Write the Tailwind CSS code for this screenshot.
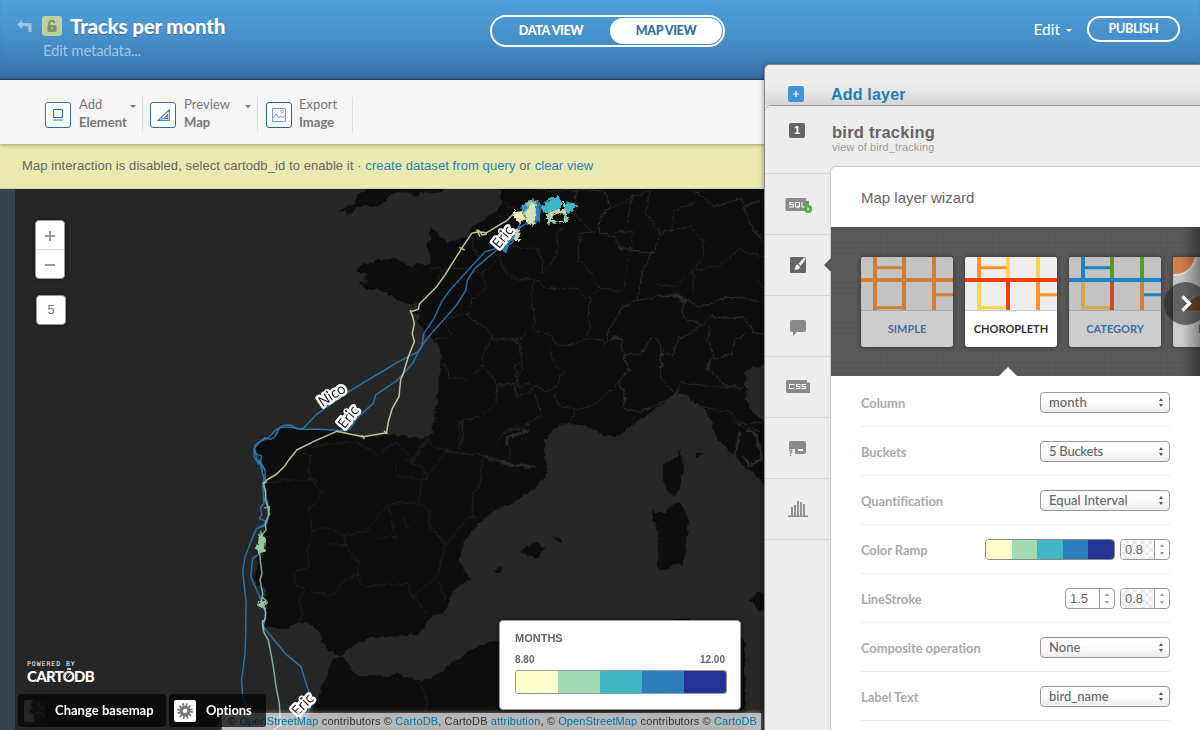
<!DOCTYPE html>
<html lang="en">
<head>
<meta charset="utf-8">
<title>Tracks per month</title>
<script src="https://cdn.jsdelivr.net/npm/@tailwindcss/browser@4"></script>
</head>
<body class="relative flex h-[730px] w-[1200px] flex-col overflow-hidden bg-[#36424a] font-['Lato',sans-serif]">

<!-- Header -->
<header class="flex h-[80px] shrink-0 items-start border-b border-[#2b4a68] bg-gradient-to-b from-[#519fdb] via-[#468fc9] to-[#3871a8] shadow-[inset_0_-6px_5px_-3px_rgba(20,60,110,0.25)]">
  <div class="flex w-[490px] pl-[17px] pt-[13px]">
    <svg class="mt-[6px] h-[14px] w-[15px]" viewBox="0 0 15 14"><path d="M0 5.500 5 1v3h9.500v9h-3.200V7.200H5V10z" fill="#9cc7ea"/></svg>
    <div class="ml-[10px] flex flex-col">
      <div class="flex h-[26px] items-center">
        <span class="flex h-5 w-5 items-center justify-center rounded-[3px] bg-[#bdd0a0]">
          <svg class="h-3 w-[10px]" viewBox="0 0 10 12"><path d="M2.200 5.500V3.200a2.700 2.400 0 0 1 5.400 0" fill="none" stroke="#7f9070" stroke-width="1.800"/><rect x="0.500" y="5" width="9" height="7" rx="1" fill="#7f9070"/><rect x="4.300" y="7.200" width="1.400" height="2.300" fill="#bdd0a0"/></svg>
        </span>
        <h1 class="ml-2 -mt-px whitespace-nowrap text-[20.500px] leading-[26px] font-black tracking-[-0.2px] text-white [text-shadow:0_1px_1px_rgba(0,0,0,0.25)]">Tracks per month</h1>
      </div>
      <span class="ml-px mt-px text-[15px] leading-5 tracking-[-0.25px] text-[#a0c5e6]">Edit metadata...</span>
    </div>
  </div>
  <nav class="mt-[15px] flex h-8 w-[235px] items-center rounded-full border-2 border-white p-[1px] text-[12.500px] font-black">
    <span class="w-[117px] pr-px text-center tracking-[-0.35px] text-white">DATA VIEW</span>
    <span class="flex h-[26px] w-[112px] items-center justify-center rounded-full bg-white tracking-[-0.4px] text-[#2f6ea6]">MAP VIEW</span>
  </nav>
  <div class="ml-auto mr-5 mt-4 flex items-center text-white">
    <span class="text-[15.500px] leading-6">Edit</span>
    <svg class="ml-[6px] mt-[2px] h-[3px] w-[6px]" viewBox="0 0 6 3"><path d="M0 0h6L3 3z" fill="#fff"/></svg>
    <span class="ml-[15px] flex h-[26px] w-[93px] items-center justify-center rounded-full border-2 border-white text-[12.500px] font-bold tracking-[-0.3px]">PUBLISH</span>
  </div>
</header>

<!-- Toolbar -->
<section class="relative z-10 flex h-16 shrink-0 items-start bg-[#f5f5f5] pl-[45px] pt-[17px] text-[13px] leading-[18px] tracking-[0.05px] text-[#777] shadow-[0_1px_4px_rgba(0,0,0,0.35)]">
  <div class="flex h-[35px] w-[98px] items-start border-r border-[#dcdcdc]">
    <span class="mt-[5px] flex h-[26px] w-[26px] items-center justify-center rounded-[3px] border border-[#2f6ea6] bg-white"><svg class="h-[12px] w-[10px]" viewBox="0 0 10 12"><path d="M.5.500h9v8h-9zM0 11h10" fill="none" stroke="#2f6ea6" stroke-width="1.100"/></svg></span>
    <div class="ml-2 -mt-[2px] w-[51px]">Add<br><b>Element</b></div>
    <svg class="mt-[8px] h-[3px] w-[6px]" viewBox="0 0 6 3"><path d="M0 0h6L3 3z" fill="#777"/></svg>
  </div>
  <div class="ml-[7px] flex h-[35px] w-[108px] items-start border-r border-[#dcdcdc]">
    <span class="mt-[5px] flex h-[26px] w-[26px] items-center justify-center rounded-[3px] border border-[#2f6ea6] bg-white"><svg class="h-[12px] w-[13px]" viewBox="0 0 13 12"><path d="M.8 11.400H12.300V.8zM7 9.500h3.500V6z" fill="none" stroke="#4482b8" stroke-width="1.100"/><path d="M3 11V9.500M5 11V7.800" stroke="#4482b8" stroke-width=".8"/></svg></span>
    <div class="ml-2 -mt-[2px] w-[61px]">Preview<br><b>Map</b></div>
    <svg class="mt-[8px] h-[3px] w-[6px]" viewBox="0 0 6 3"><path d="M0 0h6L3 3z" fill="#777"/></svg>
  </div>
  <div class="ml-[8px] flex h-[35px] w-[87px] items-start border-r border-[#dcdcdc]">
    <span class="mt-[5px] flex h-[26px] w-[26px] items-center justify-center rounded-[3px] border border-[#2f5f8c] bg-white"><svg class="h-[14px] w-[14px]" viewBox="0 0 14 14"><path d="M.5.500h13v13H.5zM.8 10l3.400-4 3 4 1.600-2 1.800 2 2.700-3" fill="none" stroke="#6d9fd0" stroke-width="1"/><circle cx="10.300" cy="3.500" r="1.200" fill="none" stroke="#6d9fd0" stroke-width=".9"/></svg></span>
    <div class="ml-[7px] -mt-[2px]">Export<br><b>Image</b></div>
  </div>
</section>

<!-- Notice -->
<p class="h-[45px] shrink-0 border-b border-[#cfcfb9] bg-[#eae9b0] pl-[22px] text-[13px] leading-[43px] tracking-[0.083px] whitespace-nowrap text-[#666] font-['Liberation_Sans',sans-serif]">Map interaction is disabled, select cartodb_id to enable it · <span class="text-[#1f83b4]">create dataset from query</span> or <span class="text-[#1f83b4]">clear view</span></p>

<!-- Map -->
<main class="relative ml-[15px] h-[541px] w-[750px] overflow-hidden bg-[#252527]">
  <svg class="block h-[541px] w-[750px]" viewBox="15 189 750 541">
    <defs>
      <filter id="coast" x="0" y="0" width="1" height="1"><feTurbulence type="fractalNoise" baseFrequency=".16" numOctaves="2" seed="4"/><feDisplacementMap in="SourceGraphic" scale="6" xChannelSelector="R" yChannelSelector="G"/></filter>
      <filter id="blob" x="-20%" y="-20%" width="1.400" height="1.400"><feTurbulence type="fractalNoise" baseFrequency=".3" numOctaves="2" seed="9"/><feDisplacementMap in="SourceGraphic" scale="6" xChannelSelector="R" yChannelSelector="G"/></filter>
    </defs>
    <g filter="url(#coast)">
      <rect x="0" y="170" width="790" height="580" fill="#252527"/>
      <g fill="#0e0e0e">
        <path d="M337 212l8-4 7-4 6-7 4-5 4-8h80l-2 5-4 3-8 1-12-1-2 4-8-3-8-2-10 3-6 6-6 5-8 2-7-1-7 1-5 4-6 4-2-4z"/>
        <path d="M501 170V205l-6 7-7 5-8 5-9 5-3 8-8 4-13 3-7-5-2-5-9-5 1 3 1 10-3 3 2 12v8h-10l-8 4-9-5-8-5-8 3-9-1-5 4-10 0-5 4v5l9 3-4 3 5 2-8 3 7 7h10l10 3 10 7 10 3 5 2 5-2 1 5-8 4 3 1h7l-2 9 5 8 7 7 7 6 5 10-1 14-2 16-2 20-3 20-2 10-5 4-10 1-14-2-15-1-25 2-13-4-13-2-17-1-17-1-10-3h-10l-6 7-9 5-8 4-5 5 2 6 5 6 1 10 2 10 2 13 2 17-1 13-6 17-4 13-1 13-2 14 2 6 8 4v13 13l-2 12 10-1 14 3 10-6h11l10 7 4 10 6 9 12 8 5-5 7-7 11-3 7-5h17l16-1 12-2 3 1 9-13 6-7 15-4v-9l7-12 8-6 8-6-6-6-5-10v-8l5-14 10-11 10-12 12-8 20-9 20-13 9-12 2-5-1-10-3-8 1-12 6-8 13-9 15 2 10 2 9 5 9 3 10 2 10-7 8-7 15-10 13-10 10-9h10l10 6 14 12 3 6 3 10 4 12 10 10 11 9 5 6 14 12 40 38V170z"/>
        <path d="M332 660l-7 20-7 17-6 16-8 8-8 30H745V640l-20-18-30-3-17 0-60 18-121 3-7 2-13 5-10 6-14 9-10 8-13 8-13 2-14-3-5-5-8 4-10-1-15 2-12-4-6-10-2-6z"/>
        <path d="M680 448l2 10 1 15-3 14-4 10-4-2-5-5-3-10-2-8 1-7 7-4 7-3zM680 502l4 8 5 13-3 17-1 13-2 12-6-2-5 0-4 8-6 1-5-7 1-12v-10l-1-16-5-9 1-10 2 5h8l9-7zM520 552l8-7 10-4 1 4 6 2-5 9-4 4-6-5-6-1zM553 538l7-1 4 6-6-2zM494 570l8-4-1 6-4 2zM696 453h7v3h-7zM749 600l8-7h20v20l-17-2z"/>
      </g>
      <path d="M790 362l-26 3-11 3-8 5 1 14 1 16 6 10 10 7 27 22z" fill="#252527"/>
      <path d="M669 292l8 2 11 6-2 4-9-5zM608 340l7-4 9 2-8 2zM712 358l-4 10-3 4 2-10z" fill="#252527"/>
    </g>
    <!-- administrative borders -->
    <g filter="url(#coast)" fill="none" stroke="#2b2b2b" stroke-width="2.400" stroke-linejoin="round">
      <g transform="translate(500 180) scale(.33333)">
        <path stroke="#363636" d="M270 28l45 8 15 40-15 20-20 30 5 35 45 10 15 35 45 5 55 10 15-40 5-40M455 215l-25 50-15 95 65-10 30 0M415 360l-45 20-30 45-20 55-10 20M365 470l5 55 15 45-30 35 20 40-5 40 50 10 60-25 55-35M385 570l-10-45 50-5 25-45 20 0 15 50-5 60 40 55M550 370l0 45 60 20 20-25 60 5 40-5 30 45 30 5M500 345l60 15 40 25 50-25 70-10 70 20M610 435l-50 30-25 10-20 55-30-20M790 60l-60 20 20 50 40 60M730 75l-5-20-80 25-60-45M740 460l-35 20-10 40-50 20-20-60 0-40M630 530l-5 40 50 45 75 10"/>
        <path d="M240 160l45-5M240 165l-5 75 40 40 25 45 70 10 15-100M225 28l5 80 40 45M0 225l20 50 40 25 45-5 30 30 10 0 90 0 25 30 45-30M30 200l80 5 20 35-5 40 50-60-5-60 30-20M105 290l-10 60 10 80-10 20 60 15 15 35 60-10 20-15 70 10M270 350l-5 120M0 475l60 0M75 455l-15 35 5 70-20 60 5 30 40-10 15-25 35 15 30-10 20-45-25-20-15-50M0 610l45 5M105 645l20 60-60 40-60 20M165 640l10 40 50 5 60-10 70-65M225 690l-25 70M320 90l130-60-10 70 40 60 30-10 60-10 40 50 0 40-30 40 0 70M460 310l60 10 70-50 60-10 70-50 70 20M515 155l5-60 60-25M345 155l50 0 5 40-10 15M530 640l10-35 60 10 120 10M530 640l70 40 90 15 30 40 60 20M380 130l20-90M100 28l60 5 110-5M770 300l20 25M700 730l90 0"/>
      </g>
      <g transform="translate(230 180) scale(.33333)">
        <path d="M725 170l10 55 60-5 20 20 5 30 30 30 35 0M630 265l85 0 50 20 0 40-40 35-10 45-60 10-20-20M600 265l35 0-10 50-55 60M710 405l60 40 20 30-30 40 0 40-45 45-60-10-15-40M790 480l70 0 30-20M860 480l20 60-25 20 10 60 35-10M755 555l50 60 50 0 0 35M805 615l-10 55-40 40-60 10 5 50-15 50M645 415l20 60-60 0M800 790l30-40 70-5M810 110l40 20M820 70l40 20M800 240l-40 40"/>
      </g>
      <g transform="translate(230 420) scale(.33333)">
        <path stroke="#353535" d="M590 50l20 30 80 20 70 5 40 20 100 20M765 105l40 15 95 25"/>
        <path d="M105 185l40 0 10-5 100 0 0 20 25 15-40 50 5 70-10 60 0 50-45 10 10 40 25 15-20 35 15 35-30 55 10 60M220 100l25 5-10 40 10 25-10 10M220 100l15-20 145-15 60 40 60-40 50 60 20-30 20-40M500 120l0 45 40 10 50 5-10-40-60-20M590 170l20-20 40-60M545 120l50-60M580 180l-15 70 35 20 0 60 50 40 70-80 20 0M760 110l-10 90-20 20-5 70M240 335l50-15 50 25 70-10 60-80 60-10 30 10M475 260l15 60 10 30-35 0-20 15M340 345l5 30-45-5M345 375l25 30 20 20-10 40-40 20-30 40-70-10M355 415l35 10M370 470l40 30 125-10 10 40 45-35 35-30 20-90-40-60M545 530l30 30 20 25M625 480l20 60M520 295l10 30 10-5M720 290l25 15M690 0l0 80M830 60l10 50M555 780l30 30 5 70M830 30l70-20"/>
      </g>
      <path d="M500 463l12 2 24 2M500 461l10 2M527 430l-20 8 0 8M740 432l-6 28 8 6M746 430l10 4 6 24-12 8-8-10"/>
    </g>
    <!-- migration tracks -->
    <g fill="none" stroke-width="4.500" stroke-linejoin="round" stroke-opacity=".85">
      <g transform="translate(230 180) scale(.33333)">
        <path stroke="#2c7fb8" d="M890 130L855 150 845 180 810 202 765 215 722 262 660 330 635 365 612 415 582 460 575 500 565 515 500 548 470 567 400 608 340 645 260 703 220 745 205 748 182 735 160 736 135 752 115 773 90 785 72 805 72 830 85 852 92 850 98 875"/>
        <path stroke="#2c7fb8" d="M870 125L865 160 845 190 820 195 770 235 735 265 712 300 708 330 680 375 645 415 600 465 585 485 570 505 548 550 500 603 437 645 430 670 385 710 360 745 348 752 270 748 215 748 180 742 150 742 135 770 122 778 105 773 75 795 74 820 95 828 90 850 105 870"/>
        <path stroke="#e2e2b0" d="M900 90L852 100 830 122 800 140 770 158 745 155 725 160 695 205 670 245 645 285 620 320 568 372 565 388 542 395 548 410 553 430 547 460 553 485 535 530 520 580 512 600 507 650 487 685 475 725 470 758 400 770 320 754 250 785 200 810 175 842 165 857 140 882 110 900 100 912M740 148l10 22M745 150l12 15 14-3M688 202l16 8M395 765l8 12M540 390l6 12M462 752l10 10"/>
      </g>
      <g transform="translate(230 420) scale(.33333)">
        <path stroke="#2c7fb8" d="M75 90L80 115 92 135 95 150 102 175 98 200 102 250 92 262 95 285 88 295 108 305 105 318 80 325 65 360 45 410 38 455 48 545 47 640 45 700 35 780 38 830 55 880 65 915M88 120L105 150 106 175 100 190 112 250 118 275 110 310 85 322M90 400L68 415 62 470 80 510 95 545 106 575 105 595 100 620 165 700 213 740 225 780 235 810 250 845 230 885 200 900M235 808l8 30-6 15 18-5"/>
        <path stroke="#93c9a5" d="M100 190L107 215 106 240 114 262 116 285 106 310 108 330 96 345 98 360 88 390 92 430 96 460 90 480 98 520 95 545 107 575 106 595 97 610 103 640 115 660 130 740 138 800 148 850 152 915 130 930M97 190l14 -4"/>
        <path stroke="#7fc7b0" stroke-width="4" d="M103 264l16 -4-4 24 6-2M95 530l14 12-25 14 25 10M97 600l3 35M92 332l6 40"/>
      </g>
    </g>
    <path fill="#93c9a5" filter="url(#blob)" d="M261 532l5 7-1 12-6 4-3-7 2-10zM258 604l8-5 1 5-7 4z"/>
    <!-- dense breeding-ground traces -->
    <g filter="url(#blob)">
      <path fill="#2c7fb8" d="M526 203l10-3 5 3-1 19-8 2zM502 242l7 4-2 8-6-4zM522 224l-4 10-10 10 2-8z"/>
      <path fill="#8fc4a0" d="M522 206l10-7 4 4-3 12-10 2z"/>
      <path fill="#eeeab8" d="M514 210l8 3 4 6-6 4-6-5z"/>
      <path fill="#d6e6ba" d="M526 213l5-10 5 2-1 16-3 5-7-5z"/>
      <path fill="#2c8fc0" d="M520 209l5-5 3 3-5 5z"/>
      <path fill="#d2d3a0" d="M516 229h3l1 11h-6z"/>
      <path fill="#98d0ae" d="M547 208l5 2 0 11 12 0v1l-14 1-1 4-2-4zM563 202l3 0 0 12 2 8-3 0z"/>
      <path fill="#d2d3a0" d="M551 212l8-4 6 2-1-6 3 2-1 10-3-3-8 1-4 7z"/>
      <path fill="#41b6c4" d="M541 206l6-5 5-4 8 0 2 8-4 5-6 1-4 3-6-4zM564 210l3-8 11 2-3 5-7 5z"/>
    </g>
    <g font-family="Open Sans, sans-serif" font-size="14" fill="#111" stroke="#fff" stroke-width="5" stroke-linejoin="round" paint-order="stroke" text-anchor="middle">
      <text transform="translate(506.500 240) rotate(-51)">Eric</text>
      <text transform="translate(334.500 399) rotate(-33)">Nico</text>
      <text transform="translate(352 420) rotate(-51)">Eric</text>
      <text transform="translate(306 708) rotate(-45)">Eric</text>
    </g>
  </svg>

  <!-- zoom control -->
  <div class="absolute left-5 top-[31px] flex h-[59px] w-[30px] flex-col rounded-[4px] border border-[#999] bg-white shadow-[0_0_4px_rgba(0,0,0,0.5)]">
    <span class="flex flex-1 items-center justify-center border-b border-[#ddd] pt-[2px]"><svg class="h-[10px] w-[10px]" viewBox="0 0 10 10"><path d="M0 5h10M5 0v10" stroke="#999" stroke-width="2"/></svg></span>
    <span class="flex flex-1 items-center justify-center pt-[2px]"><svg class="h-[2px] w-[10px]" viewBox="0 0 10 2"><path d="M0 1h10" stroke="#999" stroke-width="2"/></svg></span>
  </div>
  <div class="absolute left-[21px] top-[106px] flex h-[30px] w-[30px] items-center justify-center rounded-[4px] border border-[#999] bg-white text-[13px] text-[#777] shadow-[0_0_4px_rgba(0,0,0,0.5)] font-['Liberation_Sans',sans-serif]">5</div>

  <!-- logo -->
  <div class="absolute left-3 top-[471px] flex flex-col text-white">
    <span class="text-[6.500px] leading-[9px] tracking-[0.95px] font-['DejaVu_Sans_Mono',monospace]">POWERED BY</span>
    <span class="text-[15px] leading-[15px] font-black tracking-[-0.75px]">CARTODB</span>
    <svg class="absolute left-[38px] top-[8px] h-[12px] w-[9px]" viewBox="0 0 9 12"><path d="M2 1h4" stroke="#fff" stroke-width="1.500"/><path d="M2.500 9.500l3.500-4" stroke="#fff" stroke-width="1"/></svg>
  </div>

  <!-- attribution -->
  <div class="absolute bottom-0 left-[207px] h-[17px] w-[539px] bg-white/70 pl-[6px] text-[11px] leading-[17px] tracking-[0.118px] whitespace-nowrap text-[#333] shadow-[0_0_5px_rgba(190,190,190,0.7)] font-['Liberation_Sans',sans-serif]">© <span class="text-[#0078a8]">OpenStreetMap</span> contributors © <span class="text-[#0078a8]">CartoDB</span>, CartoDB <span class="text-[#0078a8]">attribution</span>, © <span class="text-[#0078a8]">OpenStreetMap</span> contributors © <span class="text-[#0078a8]">CartoDB</span></div>

  <!-- basemap and options buttons -->
  <div class="absolute left-[3px] top-[505px] flex gap-[3px] text-[13px] font-bold text-white">
    <div class="flex h-[33px] w-[148px] items-center rounded-[3px] bg-black/70 pl-[6px]">
      <svg class="h-[22px] w-[22px] rounded-[2px]" viewBox="0 0 22 22"><rect width="22" height="22" fill="#0e0e0e"/><path d="M0 0h9l-2 4 1 4-3 4 5 2v8H0z" fill="#252527"/><path d="M14 2l2 5 4 2M10 13l6-1 4 5" fill="none" stroke="#202020"/></svg>
      <span class="ml-[9px] tracking-[0.03px]">Change basemap</span>
    </div>
    <div class="flex h-[33px] w-[97px] items-center rounded-[3px] bg-black/70 pl-[5px]">
      <span class="flex h-[22px] w-[22px] items-center justify-center rounded-[2px] bg-white"><svg class="h-4 w-4" viewBox="-8 -8 16 16"><circle r="6.500" fill="none" stroke="#777" stroke-width="2.600" stroke-dasharray="1.700 1.700"/><circle r="3.900" fill="none" stroke="#777" stroke-width="3.200"/></svg></span>
      <span class="ml-[10px] tracking-[-0.1px]">Options</span>
    </div>
  </div>

  <!-- legend -->
  <div class="absolute left-[484px] top-[431px] flex h-[90px] w-[242px] flex-col rounded-[4px] border border-[#999] bg-white px-[15px] font-bold text-[#666] shadow-[0_0_4px_rgba(0,0,0,0.5)] font-['Liberation_Sans',sans-serif]">
    <span class="mt-[10px] text-[11px] leading-[14px]">MONTHS</span>
    <div class="mt-[8px] flex justify-between text-[10px] leading-[13px]"><span>8.80</span><span>12.00</span></div>
    <div class="mt-[4px] flex h-6 w-[212px] overflow-hidden rounded-[3px] border border-[#999]"><i class="flex-1 bg-[#ffffcc]"></i><i class="flex-1 bg-[#a1dab4]"></i><i class="flex-1 bg-[#41b6c4]"></i><i class="flex-1 bg-[#2c7fb8]"></i><i class="flex-1 bg-[#253494]"></i></div>
  </div>
</main>

<!-- Layer panel, laid over header and map -->
<aside class="absolute right-0 top-16 z-20 flex h-[666px] w-[436px] flex-col rounded-tl-[6px] border-l border-t border-[#8c8c8c] bg-[#ededed] shadow-[-1px_0_4px_rgba(0,0,0,0.3)] font-['Liberation_Sans',sans-serif]">
  <div class="flex h-[40px] shrink-0 items-start rounded-tl-[5px] bg-gradient-to-b from-[#ededed] from-50% to-[#d6d6d6] pl-[23px] pt-[19px]">
    <span class="mt-[2px] flex h-4 w-4 items-center justify-center rounded-[2px] bg-[#4593d0]"><svg class="h-[6px] w-[6px]" viewBox="0 0 6 6"><path d="M0 3h6M3 0v6" stroke="#fff" stroke-width="1.200"/></svg></span>
    <span class="ml-[27px] mt-px text-[16px] leading-5 font-bold tracking-[0.2px] text-[#1f7fb0]">Add layer</span>
  </div>
  <div class="relative flex min-h-0 flex-1 flex-col rounded-tl-[6px] border-t border-[#999] bg-[#ededed]">
    <div class="flex h-[60px] shrink-0 items-start pl-[24px] pt-[17px]">
      <span class="flex h-[15px] w-4 items-center justify-center rounded-[2px] bg-[#666] text-[11px] font-bold text-white">1</span>
      <div class="ml-[27px] flex flex-col"><span class="text-[16.500px] leading-[18px] font-bold tracking-[0.25px] text-[#666]">bird tracking</span><span class="text-[11px] leading-[13px] tracking-[0.1px] text-[#999]">view of bird_tracking</span></div>
    </div>
    <div class="flex min-h-0 flex-1">
      <!-- module tabs -->
      <div class="flex w-[65px] shrink-0 flex-col pt-[7px] [&>div]:h-[61px] [&>div]:flex [&>div]:justify-center [&>div]:items-center [&>div]:border-t [&>div]:border-[#d6d6d6]">
        <div><svg class="ml-[2px] mt-[2px] h-[16px] w-[28px]" viewBox="0 0 28 16"><path d="M2 1h19v3h3v10H2a1.500 1.500 0 0 1-1.500-1.500v-10A1.500 1.500 0 0 1 2 1z" fill="#8a8a8a"/><path d="M8.500 5.500H4.500v2h4V10H4M10.500 5.500h4V10h-4zM13 8.500v3M17 5v5h3.500" fill="none" stroke="#fff" stroke-width="1"/><circle cx="23.200" cy="12" r="4" fill="#4fb52c"/><path d="M22.500 10v4l2-2z" fill="#fff"/></svg></div>
        <div><svg class="h-4 w-4" viewBox="0 0 16 16"><rect width="16" height="16" rx="1.500" fill="#666"/><path d="M15.500 1l-1.800-.2-5.200 5.700 2.200 2.400 4.600-5.800z" fill="#ededed"/><path d="M7.800 7.300l2.200 2.400c-.2 2.300-2 3.500-6 3 1.300-.8 1-2 1.500-3.300.4-1.200 1.300-1.900 2.300-2.100z" fill="#ededed"/><path d="M7.600 6.700l3 3.200" stroke="#666" stroke-width=".8"/></svg></div>
        <div><svg class="mt-[4px] h-4 w-4" viewBox="0 0 16 16"><path d="M2 0h12a2 2 0 0 1 2 2v8a2 2 0 0 1-2 2H7L3 16v-4H2a2 2 0 0 1-2-2V2a2 2 0 0 1 2-2z" fill="#8a8a8a"/></svg></div>
        <div><svg class="ml-[1px] -mt-px h-[13px] w-6" viewBox="0 0 24 13"><path d="M1.500 0H21v2.500h3V13H1.500A1.500 1.500 0 0 1 0 11.500v-10A1.500 1.500 0 0 1 1.500 0z" fill="#8a8a8a"/><path d="M8.500 4.500H3.500v4h5M14.500 4.500h-4v2h3.500v2H10M20 4.500h-4v2h3.500v2H15.500" fill="none" stroke="#fff" stroke-width="1"/></svg></div>
        <div><svg class="mt-[2px] h-[16px] w-[19px]" viewBox="0 0 19 16"><path d="M3 0h13a2 2 0 0 1 2 2v9a2 2 0 0 1-2 2H7V8H1V2a2 2 0 0 1 2-2z" fill="#8a8a8a"/><path d="M10 9h5" stroke="#fff" stroke-width="2"/><path d="M0 8h5.500v7H0z" fill="#ededed"/><path d="M.8 9.200h3v2H2.500v1.600M2.500 13.800v1.200" fill="none" stroke="#8a8a8a" stroke-width="1.300"/></svg></div>
        <div><svg class="h-4 w-5" viewBox="0 0 20 16"><path d="M0 15.500h20M4 15V6M7 15V4M10 15V0M13 15V1M16 15V3" stroke="#8a8a8a" stroke-width="1.800"/></svg></div>
        <div></div>
      </div>
      <!-- wizard -->
      <section class="relative flex min-w-0 flex-1 flex-col rounded-tl-[6px] border-l border-t border-[#cbcbcb] bg-white">
        <h2 class="h-[60px] shrink-0 pl-[30px] text-[15px] leading-[61px] text-[#666]">Map layer wizard</h2>
        <div class="relative flex h-[149px] shrink-0 gap-3 overflow-hidden bg-[#585858] bg-[repeating-linear-gradient(0deg,rgba(255,255,255,0.015)_0_1px,transparent_1px_5px),repeating-linear-gradient(90deg,rgba(0,0,0,0.02)_0_1px,transparent_1px_7px)] pl-[30px] pt-[30px] text-[11px] font-bold text-[#3d6fa3] font-['Lato',sans-serif] [&>div]:h-[90px] [&>div]:w-[92px] [&>div]:shrink-0 [&>div]:flex [&>div]:flex-col [&>div]:rounded-[3px] [&>div]:overflow-hidden [&>div]:shadow-[0_0_5px_rgba(0,0,0,0.45)]">
          <div class="bg-[#cdcdcd]">
            <svg class="h-[53px] w-[92px] bg-[#c3c3c3]" viewBox="0 0 276 159"><g stroke="#cd8033" fill="none"><path stroke-width="12" d="M42 0v159M129 0v159M219 0v159M0 69h276"/><path stroke-width="9" d="M42 32h87M42 152h87M219 113h57"/></g></svg>
            <span class="flex flex-1 items-center justify-center border-t border-[#aaa]">SIMPLE</span>
          </div>
          <div class="bg-white text-[#333]">
            <svg class="h-[53px] w-[92px] bg-[#eee]" viewBox="0 0 276 159"><g fill="none" stroke-width="12"><path stroke="#ffd34d" d="M42 69v90M129 0v69M219 0v69"/><path stroke="#ffd34d" stroke-width="9" d="M42 152h87"/><path stroke="#ff9328" d="M42 0v69M219 69v90"/><path stroke="#ff9328" stroke-width="9" d="M42 32h81M219 113h57"/><path stroke="#ff3d00" d="M0 69h276M129 69v90"/></g></svg>
            <span class="flex flex-1 items-center justify-center border-t border-[#ccc]">CHOROPLETH</span>
          </div>
          <div class="bg-[#cdcdcd]">
            <svg class="h-[53px] w-[92px] bg-[#c3c3c3]" viewBox="0 0 276 159"><g fill="none" stroke-width="12"><path stroke="#cfa94b" d="M42 69v90"/><path stroke="#cfa94b" stroke-width="9" d="M42 152h87"/><path stroke="#5a9a20" d="M129 0v69M219 0v69"/><path stroke="#cf4a24" d="M129 69v90"/><path stroke="#cd8033" d="M219 69v90"/><path stroke="#1c83c4" d="M42 0v69M0 69h276"/><path stroke="#1c83c4" stroke-width="9" d="M48 32h75M225 113h51"/></g></svg>
            <span class="flex flex-1 items-center justify-center border-t border-[#aaa]">CATEGORY</span>
          </div>
          <div class="bg-[#cdcdcd]">
            <svg class="h-[53px] w-[92px] bg-[#c3c3c3]" viewBox="0 0 92 53"><circle r="21" cx="2" cy="-3" fill="#cf7f45" stroke="#ddd" stroke-width="2"/><circle r="17" cx="30" cy="54" fill="#cf6f2f" stroke="#ddd" stroke-width="2"/></svg>
            <span class="flex flex-1 items-center border-t border-[#aaa] pl-[25px]">BUBBLE</span>
          </div>
          <i class="absolute inset-y-0 right-0 w-[18px] bg-gradient-to-r from-transparent to-black/35"></i>
          <svg class="absolute left-[333px] top-[55px] h-[43px] w-[43px]" viewBox="0 0 43 43"><circle cx="21.500" cy="21.500" r="21.500" fill="#222" fill-opacity=".6"/><path d="M18.500 14.500l7 7-7 7" fill="none" stroke="#fff" stroke-width="3.200"/></svg>
          <svg class="absolute bottom-0 left-[168px] h-[9px] w-[18px]" viewBox="0 0 18 9"><path d="M0 9l9-9 9 9z" fill="#fff"/></svg>
        </div>
        <svg class="absolute -left-[7px] top-[91px] h-[14px] w-[7px]" viewBox="0 0 7 14"><path d="M7 0v14L0 7z" fill="#585858"/></svg>

        <div class="mr-[30px] ml-[30px] flex flex-col pt-[2px] text-[13px] text-[#666] font-['Lato',sans-serif] [&>div]:h-[49px] [&>div]:flex [&>div]:items-center [&>div]:justify-between [&>div]:border-b [&>div]:border-[#eee] [&_b]:text-[#aaa] [&_b]:mt-[3px] [&_b]:tracking-[-0.1px]">
          <div><b>Column</b><span class="flex h-[21px] w-[130px] items-center justify-between rounded-[4px] border border-[#999] bg-gradient-to-b from-white from-40% to-[#ececec] pl-2 pr-[6px] font-medium tracking-[0.1px]"><span class="mt-px">month</span><svg class="h-[9px] w-[4px]" viewBox="0 0 4 9"><path d="M0 3h4L2 0zM0 6h4L2 9z" fill="#555"/></svg></span></div>
          <div><b>Buckets</b><span class="flex h-[21px] w-[130px] items-center justify-between rounded-[4px] border border-[#999] bg-gradient-to-b from-white from-40% to-[#ececec] pl-2 pr-[6px] font-medium tracking-[-0.25px]"><span class="mt-px">5 Buckets</span><svg class="h-[9px] w-[4px]" viewBox="0 0 4 9"><path d="M0 3h4L2 0zM0 6h4L2 9z" fill="#555"/></svg></span></div>
          <div><b>Quantification</b><span class="flex h-[21px] w-[130px] items-center justify-between rounded-[4px] border border-[#999] bg-gradient-to-b from-white from-40% to-[#ececec] pl-2 pr-[6px] font-medium tracking-[0.05px]"><span class="mt-px">Equal Interval</span><svg class="h-[9px] w-[4px]" viewBox="0 0 4 9"><path d="M0 3h4L2 0zM0 6h4L2 9z" fill="#555"/></svg></span></div>
          <div><b>Color Ramp</b><span class="flex gap-[5px]">
            <span class="flex h-[21px] w-[130px] overflow-hidden rounded-[4px] border border-[#888]"><i class="flex-1 bg-[#ffffcc]"></i><i class="flex-1 bg-[#a1dab4]"></i><i class="flex-1 bg-[#41b6c4]"></i><i class="flex-1 bg-[#2c7fb8]"></i><i class="flex-1 bg-[#253494]"></i></span>
            <span class="flex h-[21px] w-[50px] overflow-hidden rounded-[4px] border border-[#999] text-[13px] leading-[19px] font-['Liberation_Sans',sans-serif]"><span class="w-[33px] bg-[repeating-conic-gradient(#ebebeb_0_25%,#fff_0_50%)] bg-[length:8px_8px] pl-1">0.8</span><span class="flex flex-1 items-center justify-center border-l border-[#999]"><svg class="h-[11px] w-[4px]" viewBox="0 0 4 11"><path d="M0 3h4L2 0zM0 8h4l-2 3z" fill="#999"/></svg></span></span></span></div>
          <div><b>LineStroke</b><span class="flex gap-[5px]">
            <span class="flex h-[21px] w-[50px] overflow-hidden rounded-[4px] border border-[#999] text-[13px] leading-[19px] font-['Liberation_Sans',sans-serif]"><span class="w-[33px] pl-1">1.5</span><span class="flex flex-1 items-center justify-center border-l border-[#999]"><svg class="h-[11px] w-[4px]" viewBox="0 0 4 11"><path d="M0 3h4L2 0zM0 8h4l-2 3z" fill="#999"/></svg></span></span>
            <span class="flex h-[21px] w-[50px] overflow-hidden rounded-[4px] border border-[#999] text-[13px] leading-[19px] font-['Liberation_Sans',sans-serif]"><span class="w-[33px] bg-[repeating-conic-gradient(#ebebeb_0_25%,#fff_0_50%)] bg-[length:8px_8px] pl-1">0.8</span><span class="flex flex-1 items-center justify-center border-l border-[#999]"><svg class="h-[11px] w-[4px]" viewBox="0 0 4 11"><path d="M0 3h4L2 0zM0 8h4l-2 3z" fill="#999"/></svg></span></span></span></div>
          <div><b>Composite operation</b><span class="flex h-[21px] w-[130px] items-center justify-between rounded-[4px] border border-[#999] bg-gradient-to-b from-white from-40% to-[#ececec] pl-2 pr-[6px] font-medium"><span class="mt-px">None</span><svg class="h-[9px] w-[4px]" viewBox="0 0 4 9"><path d="M0 3h4L2 0zM0 6h4L2 9z" fill="#555"/></svg></span></div>
          <div><b>Label Text</b><span class="flex h-[21px] w-[130px] items-center justify-between rounded-[4px] border border-[#999] bg-gradient-to-b from-white from-40% to-[#ececec] pl-2 pr-[6px] font-medium"><span class="mt-px">bird_name</span><svg class="h-[9px] w-[4px]" viewBox="0 0 4 9"><path d="M0 3h4L2 0zM0 6h4L2 9z" fill="#555"/></svg></span></div>
        </div>
      </section>
    </div>
  </div>
</aside>
</body>
</html>
